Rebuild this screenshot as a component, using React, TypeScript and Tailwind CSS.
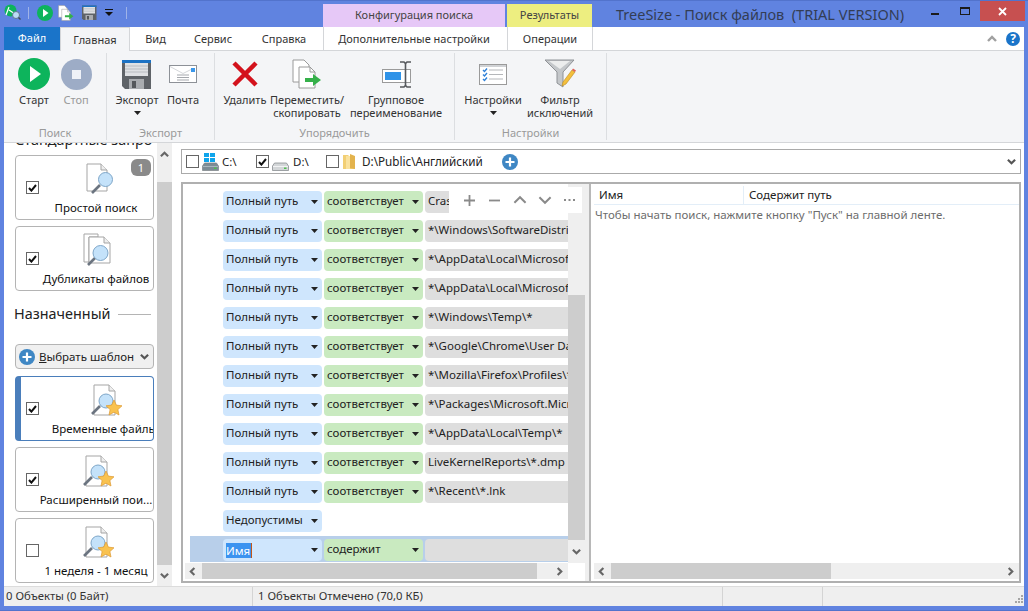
import React from "react";

const FONT = "font-['Noto_Sans','Open_Sans',sans-serif]";

function Caret({ className = "" }: { className?: string }) {
  return (
    <svg width="7" height="4" viewBox="0 0 7 4" className={className}>
      <path d="M0 0h7L3.5 4z" fill="#222" />
    </svg>
  );
}

function Check({ on }: { on?: boolean }) {
  return (
    <span className="w-[13px] h-[13px] border border-[#666] bg-white flex items-center justify-center shrink-0">
      {on && (
        <svg width="9" height="8" viewBox="0 0 9 8">
          <path d="M1 4l2.400 2.600L8 1" fill="none" stroke="#111" strokeWidth="2" />
        </svg>
      )}
    </span>
  );
}

function PlayCircle({ size = 32 }: { size?: number }) {
  return (
    <svg width={size} height={size} viewBox="0 0 32 32">
      <circle cx="16" cy="16" r="16" fill="#0db45c" />
      <path d="M12 8l11 8-11 8z" fill="#fff" />
    </svg>
  );
}

function StopCircle() {
  return (
    <svg width="31" height="31" viewBox="0 0 31 31">
      <circle cx="15.5" cy="15.5" r="15.5" fill="#9dacc6" />
      <rect x="11" y="11" width="9" height="9" fill="#eef1f7" />
    </svg>
  );
}

function Floppy({ s = 30 }: { s?: number }) {
  return (
    <svg width={s} height={s} viewBox="0 0 30 30">
      <path d="M0 1h29v29H3l-3-3z" fill="#5f6368" />
      <rect x="0" y="1" width="29" height="3" fill="#1c72c4" />
      <rect x="3" y="4" width="23" height="13" fill="#dfe1e4" />
      <path d="M3 7h23M3 10h23M3 13h23" stroke="#b9bcc1" />
      <rect x="7" y="20" width="15" height="10" fill="#a9acb0" />
      <rect x="10" y="22" width="4" height="7" fill="#55585c" />
    </svg>
  );
}

function Mail() {
  return (
    <svg width="28" height="18" viewBox="0 0 28 18">
      <rect x="0.5" y="0.5" width="27" height="17" fill="#fff" stroke="#8d9197" />
      <rect x="22" y="3" width="4" height="4" fill="#3a97ea" />
      <path d="M8 10h12M8 12.500h12M8 15h12" stroke="#a5a8ad" />
      <path d="M1 1.500l13 7 8-4" fill="none" stroke="#d5d7da" />
    </svg>
  );
}

function RedX() {
  return (
    <svg width="26" height="26" viewBox="0 0 26 26">
      <path d="M2 2l22 22M24 2L2 24" stroke="#d3121c" strokeWidth="4.5" />
    </svg>
  );
}

function CopyMove({ s = 30 }: { s?: number }) {
  return (
    <svg width={s} height={s} viewBox="0 0 30 30">
      <path d="M1 1h11l5 5v17H1z" fill="#fff" stroke="#9a9a9a" />
      <path d="M7 8h11l5 5v16H7z" fill="#fff" stroke="#9a9a9a" />
      <path d="M18 8v5h5" fill="none" stroke="#9a9a9a" />
      <path d="M13 19h8v-4l8 6-8 6v-4h-8z" fill="#35b04a" />
    </svg>
  );
}

function Rename() {
  return (
    <svg width="30" height="27" viewBox="0 0 30 27" className="ml-[2px]">
      <rect x="0.5" y="8.5" width="28" height="13" fill="#fff" stroke="#9a9a9a" />
      <rect x="3" y="11" width="16" height="8" fill="#2f93e8" />
      <path d="M18 1h4l1.500 1.500L25 1h4M23.500 2v23M18 26h4l1.500-1.500L25 26h4" fill="none" stroke="#55585c" strokeWidth="1.6" />
    </svg>
  );
}

function Settings() {
  return (
    <svg width="28" height="21" viewBox="0 0 28 21">
      <rect x="0.5" y="0.5" width="27" height="20" fill="#fff" stroke="#9a9a9a" />
      <rect x="1" y="1" width="26" height="2" fill="#d0d2d5" />
      <path d="M10 6h14M10 10.500h14M10 15h14" stroke="#b5b7ba" />
      <path d="M4 6l1.500 1.500L8 4.500M4 10.500L5.500 12 8 9M4 15l1.500 1.500L8 13.500" fill="none" stroke="#2f80d8" strokeWidth="1.4" />
    </svg>
  );
}

function Funnel() {
  return (
    <svg width="32" height="30" viewBox="0 0 32 30">
      <path d="M1 1h29L19 13v15l-6-4V13z" fill="#c4c7ca" stroke="#8f9296" />
      <path d="M5 2h21l-10 8z" fill="#eceded" />
      <path d="M18 27l1-4 9-12 3 2-9 12z" fill="#f4bf3c" stroke="#b98a20" strokeWidth="0.6" />
      <path d="M28 11l1-1.500 3 2-1 1.500z" fill="#e0625a" />
    </svg>
  );
}

function DocSearch({ variant }: { variant: "plain" | "dup" | "star" }) {
  if (variant === "plain") {
    return (
      <svg width="32" height="32" viewBox="0 0 32 32" className="overflow-visible">
        <path d="M7 3h14l6 6v21H7z" fill="#fff" stroke="#a5a5a5" />
        <path d="M21 3v6h6" fill="#eee" stroke="#a5a5a5" />
        <path d="M12 32l8-8" stroke="#6b7480" strokeWidth="2.6" />
        <circle cx="25.500" cy="18.500" r="7" fill="#c4e2fa" stroke="#7ea6c8" />
      </svg>
    );
  }
  if (variant === "dup") {
    return (
      <svg width="32" height="32" viewBox="0 0 32 32" className="overflow-visible">
        <path d="M4 2h14v3H9v25H4z" fill="#fff" stroke="#a5a5a5" />
        <path d="M9 5h15l6 6v20H9z" fill="#fff" stroke="#a5a5a5" />
        <path d="M24 5v6h6" fill="#eee" stroke="#a5a5a5" />
        <path d="M8 33l7-7" stroke="#6b7480" strokeWidth="2.6" />
        <circle cx="20.500" cy="21" r="7.500" fill="#c4e2fa" stroke="#7ea6c8" />
      </svg>
    );
  }
  return (
    <svg width="32" height="32" viewBox="0 0 32 32" className="overflow-visible">
      <path d="M6 3h15l6 6v24H6z" fill="#fff" stroke="#a5a5a5" />
      <path d="M21 3v6h6" fill="#eee" stroke="#a5a5a5" />
      <path d="M4 32l8-8" stroke="#6b7480" strokeWidth="2.6" />
      <circle cx="18" cy="19" r="7" fill="#c4e2fa" stroke="#7ea6c8" />
      <path d="M26 18l2.400 5.100 5.600.7-4.100 3.800 1.100 5.400-5-2.800-5 2.800 1.100-5.400-4.100-3.800 5.600-.7z" fill="#f9c24f" stroke="#dd9a33" strokeWidth="0.7" />
    </svg>
  );
}

function PlusCircle({ s = 16 }: { s?: number }) {
  return (
    <svg width={s} height={s} viewBox="0 0 16 16">
      <circle cx="8" cy="8" r="8" fill="#3f87c4" />
      <path d="M8 3.500v9M3.500 8h9" stroke="#fff" strokeWidth="2.200" />
    </svg>
  );
}

function DriveIcon({ win }: { win?: boolean }) {
  return (
    <svg width="17" height="18" viewBox="0 0 17 18">
      {win && (
        <g fill="#0fa5ec">
          <rect x="2" y="0" width="5" height="4" />
          <rect x="8" y="0" width="5" height="4" />
          <rect x="2" y="5" width="5" height="4" />
          <rect x="8" y="5" width="5" height="4" />
        </g>
      )}
      <path d="M0.500 13l2-3h12l2 3v4.500H0.500z" fill={win ? "#7d8c95" : "#d3d6d8"} stroke="#7c8185" strokeWidth="0.7" />
      <path d="M1 13.500h15" stroke={win ? "#a9b6bd" : "#f2f3f4"} />
      <rect x="12" y="14.500" width="2.500" height="1.500" fill="#4fc04f" />
    </svg>
  );
}

function Folder() {
  return (
    <svg width="13" height="17" viewBox="0 0 13 17">
      <path d="M0 2h5l1 1h6v13H0z" fill="#f2cf74" />
      <path d="M7 1l5 2v13l-5-1z" fill="#e3b34d" />
      <rect x="3" y="3" width="4" height="13" fill="#fae29e" />
    </svg>
  );
}

function Chev({ dir, color = "#666", s = 9, w = 2.4 }: { dir: "l" | "r" | "u" | "d"; color?: string; s?: number; w?: number }) {
  const d = { l: "M6 1L2 5l4 4", r: "M3 1l4 4-4 4", u: "M1 7l4-4 4 4", d: "M1 3l4 4 4-4" }[dir];
  return (
    <svg width={s} height={s} viewBox="0 0 10 10">
      <path d={d} fill="none" stroke={color} strokeWidth={w} />
    </svg>
  );
}

function RibbonBtn({ w, icon, label, caret }: { w: string; icon: React.ReactNode; label: React.ReactNode; caret?: boolean }) {
  return (
    <div className={`${w} flex flex-col items-center`}>
      <div className="h-[36px] flex items-center justify-center">{icon}</div>
      <div className="mt-[1px] text-[11px] leading-[13px] text-[#333] whitespace-nowrap text-center">{label}</div>
      {caret && <Caret className="mt-[5px]" />}
    </div>
  );
}

function Group({ w, label, children }: { w: string; label: string; children: React.ReactNode }) {
  return (
    <div className={`${w} h-[87px] mt-[2px] border-r border-[#dcdee1] flex flex-col shrink-0`}>
      <div className="flex-1 flex items-start pt-[3px]">{children}</div>
      <div className="h-[14px] leading-[14px] text-center text-[11px] text-[#9a9a9a]">{label}</div>
    </div>
  );
}

function Card({ on, variant, label, active, labelClass = "", badge }: { on?: boolean; variant: "plain" | "dup" | "star"; label: string; active?: boolean; labelClass?: string; badge?: boolean }) {
  return (
    <div className={`relative h-[65px] rounded-[4px] border flex items-center overflow-hidden ${active ? "border-[#4a7ebb] border-l-[6px]" : "border-[#b4b4b4] pl-[5px]"}`}>
      <div className="pl-[5px] shrink-0"><Check on={on} /></div>
      <div className="flex-1 min-w-0 flex flex-col items-center">
        <div className={active ? "ml-[16px]" : ""}><DocSearch variant={variant} /></div>
        <div className={`mt-[7px] -mb-[1px] text-[11.500px] leading-[16px] text-[#111] whitespace-nowrap ${labelClass}`}>{label}</div>
      </div>
      {badge && (
        <div className="absolute right-[2px] top-[3px] w-[20px] h-[17px] rounded-[6px] bg-[#8a8a8a] text-white text-[11px] leading-[17px] text-center">1</div>
      )}
    </div>
  );
}

function Row({ f, op, v, selected }: { f: string; op?: string; v?: string; selected?: boolean }) {
  return (
    <div className={`pl-[33px] flex items-start gap-[2px] shrink-0 ${selected ? "bg-[#b8cfea] h-[26px] mt-[1px] pt-[3px]" : "h-[29px] pt-[4px]"}`}>
      <div className="w-[99px] h-[22px] rounded-[4px] bg-[#cfe6fd] pl-[3px] pr-[4px] flex items-center justify-between text-[11.500px] text-[#222]">
        {selected ? <span className="bg-[#3b93f0] text-white pr-[1px] border-r border-[#c2571a] leading-[15px]">{f}</span> : <span className="-mt-[2px]">{f}</span>}
        <Caret />
      </div>
      {op && (
        <div className="w-[99px] h-[22px] rounded-[4px] bg-[#c9eac0] pl-[3px] pr-[4px] flex items-center justify-between text-[11.500px] text-[#222]">
          <span className="-mt-[2px]">{op}</span>
          <Caret />
        </div>
      )}
      {op && (
        <div className="w-[143px] h-[22px] rounded-l-[4px] bg-[#dedede] pl-[3px] pb-[2px] flex items-center overflow-hidden text-[11.500px] text-[#222] whitespace-nowrap">{v}</div>
      )}
    </div>
  );
}

function HScroll({ thumbW, className = "" }: { thumbW: string; className?: string }) {
  return (
    <div className={`h-[16px] flex items-stretch bg-[#efefef] ${className}`}>
      <div className="w-[17px] flex items-center justify-center shrink-0"><Chev dir="l" /></div>
      <div className={`${thumbW} bg-[#cdcdcd] shrink-0`} />
      <div className="flex-1" />
      <div className="w-[17px] flex items-center justify-center shrink-0"><Chev dir="r" /></div>
    </div>
  );
}

const rows: [string, string][] = [
  ["Полный путь", "Crash"],
  ["Полный путь", "*\\Windows\\SoftwareDistribution\\*"],
  ["Полный путь", "*\\AppData\\Local\\Microsoft\\*"],
  ["Полный путь", "*\\AppData\\Local\\Microsoft\\*"],
  ["Полный путь", "*\\Windows\\Temp\\*"],
  ["Полный путь", "*\\Google\\Chrome\\User Data\\*"],
  ["Полный путь", "*\\Mozilla\\Firefox\\Profiles\\*"],
  ["Полный путь", "*\\Packages\\Microsoft.MicrosoftEdge"],
  ["Полный путь", "*\\AppData\\Local\\Temp\\*"],
  ["Полный путь", "LiveKernelReports\\*.dmp"],
  ["Полный путь", "*\\Recent\\*.lnk"],
];

export default function App() {
  return (
    <div className={`${FONT} w-[1028px] h-[611px] bg-[#6083e0] flex flex-col overflow-hidden`}>
      {/* title bar */}
      <div className="h-[27px] flex shrink-0 border-t border-[#5273cc]">
        <div className="w-[323px] flex items-center pl-[4px] gap-[8px] shrink-0 pb-[3px]">
          <svg width="17" height="17" viewBox="0 0 17 17">
            <circle cx="6.500" cy="6.500" r="6" fill="#0db45c" />
            <path d="M5 3l-3 8M5 6l6 4" stroke="#fff" strokeWidth="1.200" />
            <circle cx="12" cy="11" r="3.500" fill="#bcdcf5" stroke="#60788c" />
            <path d="M14.500 13.500l2 2" stroke="#3f4a55" strokeWidth="1.500" />
          </svg>
          <div className="w-px h-[12px] bg-[#9fb3e8] ml-[-1px]" />
          <PlayCircle size={16} />
          <div className="-ml-[3px]"><CopyMove s={16} /></div>
          <Floppy s={15} />
          <svg width="8" height="7" viewBox="0 0 8 7"><path d="M0 0h8v1H0zM0 3h8L4 7z" fill="#111" /></svg>
          <div className="w-px h-[12px] bg-[#9fb3e8] ml-[5px]" />
        </div>
        <div className="w-[182px] mt-[3px] h-[23px] bg-[#e6c8f7] flex items-center justify-center text-[11px] text-[#444] shrink-0">Конфигурация поиска</div>
        <div className="w-[85px] ml-[2px] mt-[3px] h-[23px] bg-[#edee80] flex items-center justify-center text-[11px] text-[#444] shrink-0">Результаты</div>
        <div className="pl-[24px] pt-[3px] text-[14.500px] leading-[20px] text-[#333d55] whitespace-pre">TreeSize - Поиск файлов  (TRIAL VERSION)</div>
        <div className="flex-1 flex justify-end items-start pr-[3px]">
          <div className="w-[30px] h-[20px] flex items-center justify-center"><div className="w-[8px] h-[2px] bg-[#1b1b1b] mt-[5px]" /></div>
          <div className="w-[30px] h-[20px] flex items-center justify-center"><div className="w-[10px] h-[8px] border border-[#1b1b1b] border-t-2" /></div>
          <div className="w-[45px] h-[20px] bg-[#c75050] flex items-center justify-center">
            <svg width="9" height="9" viewBox="0 0 9 9"><path d="M1 1l7 7M8 1L1 8" stroke="#fff" strokeWidth="1.800" /></svg>
          </div>
        </div>
      </div>

      {/* body */}
      <div className="mx-[4px] flex-1 min-h-0 flex flex-col bg-[#f0f0f0]">
        {/* tabs */}
        <div className="h-[24px] bg-white border-b border-[#d4d6d9] flex items-stretch text-[11px] text-[#333] shrink-0 relative">
          <div className="w-[56px] bg-[#1a74c9] text-white flex items-center justify-center">Файл</div>
          <div className="w-[70px] h-[24px] bg-[#f4f5f7] border-x border-t border-[#d4d6d9] flex items-center justify-center pt-[1px]">Главная</div>
          <div className="w-[51px] flex items-center justify-center pt-[1px]">Вид</div>
          <div className="w-[64px] flex items-center justify-center pt-[1px]">Сервис</div>
          <div className="w-[78px] flex items-center justify-center pt-[1px]">Справка</div>
          <div className="w-[181px] border-l border-[#d4d6d9] flex items-center justify-center pt-[1px]">Дополнительные настройки</div>
          <div className="w-[86px] ml-[3px] border-x border-[#d4d6d9] flex items-center justify-center pt-[1px]">Операции</div>
          <div className="flex-1 flex items-center justify-end pr-[4px] gap-[9px]">
            <Chev dir="u" color="#a0a0a0" s={10} />
            <div className="w-[14px] h-[14px] rounded-full bg-[#1a74c9] text-white text-[12px] leading-[14px] font-bold text-center">?</div>
          </div>
        </div>

        {/* ribbon */}
        <div className="h-[92px] bg-[#f4f5f7] border-b border-[#d4d6d9] flex shrink-0">
          <Group w="w-[103px]" label="Поиск">
            <div className="flex pl-[9px]">
              <RibbonBtn w="w-[42px]" icon={<PlayCircle />} label="Старт" />
              <RibbonBtn w="w-[42px]" icon={<StopCircle />} label={<span className="text-[#9a9a9a]">Стоп</span>} />
            </div>
          </Group>
          <Group w="w-[108px]" label="Экспорт">
            <RibbonBtn w="w-[60px]" icon={<Floppy />} label="Экспорт" caret />
            <RibbonBtn w="w-[32px]" icon={<Mail />} label="Почта" />
          </Group>
          <Group w="w-[240px]" label="Упорядочить">
            <RibbonBtn w="w-[60px]" icon={<RedX />} label="Удалить" />
            <RibbonBtn w="w-[64px]" icon={<CopyMove />} label={<>Переместить/<br />скопировать</>} />
            <RibbonBtn w="w-[114px]" icon={<Rename />} label={<>Групповое<br />переименование</>} />
          </Group>
          <Group w="w-[152px]" label="Настройки">
            <RibbonBtn w="w-[76px]" icon={<Settings />} label="Настройки" caret />
            <RibbonBtn w="w-[58px]" icon={<Funnel />} label={<>Фильтр<br />исключений</>} />
          </Group>
        </div>

        {/* content */}
        <div className="flex-1 min-h-0 flex bg-white">
          {/* left pane */}
          <div className="w-[153px] shrink-0 overflow-hidden pl-[11px] bg-white">
            <div className="-mt-[13px] mb-[5px] h-[20px] text-[14.400px] leading-[20px] text-[#222] whitespace-nowrap overflow-hidden">Стандартные запро</div>
            <div className="w-[139px] flex flex-col">
              <Card on variant="plain" label="Простой поиск" badge />
              <div className="h-[6px]" />
              <Card on variant="dup" label="Дубликаты файлов" />
              <div className="mt-[14px] flex items-center h-[18px]">
                <span className="text-[14.400px] text-[#222] leading-[18px] -ml-[1px]">Назначенный</span>
                <div className="flex-1 h-px bg-[#b4b4b4] ml-[7px] mr-[3px]" />
              </div>
              <div className="mt-[21px] h-[25px] rounded-[4px] border border-[#b4b4b4] bg-[#f0f0f0] flex items-center pl-[3px] pr-[4px] text-[11.500px] text-[#222]">
                <PlusCircle />
                <span className="ml-[4px] flex-1 whitespace-nowrap"><u>В</u>ыбрать шаблон</span>
                <Chev dir="d" s={9} color="#555" />
              </div>
              <div className="h-[7px]" />
              <Card on variant="star" label="Временные файлы" active labelClass="ml-[17px]" />
              <div className="h-[6px]" />
              <Card on variant="star" label="Расширенный пои..." />
              <div className="h-[6px]" />
              <Card variant="star" label="1 неделя - 1 месяц" />
            </div>
          </div>
          {/* left scrollbar */}
          <div className="w-[15px] shrink-0 bg-[#efefef] flex flex-col">
            <div className="h-[39px] flex justify-center items-center pb-[19px] pt-[2px]"><Chev dir="u" s={9} /></div>
            <div className="h-[383px] bg-[#cdcdcd]" />
            <div className="flex-1 flex justify-center items-center"><Chev dir="d" s={9} /></div>
          </div>

          {/* main */}
          <div className="flex-1 min-w-0 pl-[9px] pr-[3px] pt-[6px] pb-[3px] flex flex-col bg-white">
            <div className="h-[25px] border border-[#aaa] bg-white flex items-center pl-[4px] pr-[4px] text-[11.500px] text-[#222] shrink-0">
              <Check /><span className="ml-[3px]"><DriveIcon win /></span><span className="ml-[3px] w-[34px]">C:\</span>
              <Check on /><span className="ml-[3px]"><DriveIcon /></span><span className="ml-[4px] w-[33px]">D:\</span>
              <Check /><span className="ml-[4px]"><Folder /></span><span className="ml-[6px] text-[11.700px]">D:\Public\Английский</span>
              <span className="ml-[19px]"><PlusCircle /></span>
              <span className="ml-auto"><Chev dir="d" s={9} color="#555" /></span>
            </div>
            <div className="mt-[8px] flex-1 min-h-0 border-2 border-[#b0b0b0] flex bg-white">
              {/* query */}
              <div className="w-[402px] shrink-0 flex flex-col min-h-0 relative">
                <div className="flex-1 min-h-0 flex">
                  <div className="w-[385px] pl-[7px] pt-[3px] shrink-0 flex flex-col overflow-hidden">
                    {rows.map((r, i) => (
                      <Row key={i} f={r[0]} op="соответствует" v={r[1]} />
                    ))}
                    <Row f="Недопустимы" />
                    <Row f="Имя" op="содержит" v="" selected />
                  </div>
                  <div className="flex-1 bg-[#efefef] flex flex-col">
                    <div className="h-[111px]" />
                    <div className="h-[245px] bg-[#cdcdcd]" />
                    <div className="flex-1 flex justify-center items-center"><Chev dir="d" s={9} /></div>
                  </div>
                </div>
                <div className="h-[16px] mb-[2px] flex pl-[2px]">
                  <HScroll thumbW="w-[335px]" className="w-[383px]" />
                </div>
                {/* floating toolbar */}
                <div className="absolute left-[266px] top-[3px] w-[133px] h-[26px] bg-white flex items-center pl-[15px] gap-[12px]">
                  <svg width="11" height="11" viewBox="0 0 11 11"><path d="M5.500 0v11M0 5.500h11" stroke="#8a8a8a" strokeWidth="1.800" /></svg>
                  <svg width="11" height="11" viewBox="0 0 11 11" className="ml-[2px]"><path d="M0 5.500h11" stroke="#8a8a8a" strokeWidth="1.800" /></svg>
                  <span className="ml-[1px]"><Chev dir="u" s={14} color="#8a8a8a" w={1.400} /></span>
                  <span className="-ml-[1px]"><Chev dir="d" s={14} color="#8a8a8a" w={1.400} /></span>
                  <svg width="11" height="3" viewBox="0 0 11 3"><path d="M0 0h2v2H0zM4.500 0h2v2h-2zM9 0h2v2H9z" fill="#8a8a8a" /></svg>
                </div>
              </div>
              {/* splitter */}
              <div className="w-[4px] bg-[#efefef] shrink-0" />
              <div className="w-[2px] bg-[#b8b8b8] shrink-0" />
              {/* results */}
              <div className="flex-1 min-w-0 pl-[3px] flex flex-col">
                <div className="h-[20px] mt-[1px] border-b border-[#e3eef8] flex items-center text-[11.500px] text-[#222] shrink-0 pt-[1px]">
                  <div className="w-[150px] pl-[5px] h-full flex items-center border-r border-[#e3eef8]">Имя</div>
                  <div className="pl-[5px]">Содержит путь</div>
                </div>
                <div className="pl-[1px] pt-[2px] text-[11.500px] text-[#6d6d6d] leading-[16px] whitespace-nowrap flex-1">Чтобы начать поиск, нажмите кнопку "Пуск" на главной ленте.</div>
                <HScroll thumbW="w-[220px]" className="mb-[2px]" />
              </div>
            </div>
          </div>
        </div>

        {/* status */}
        <div className="h-[20px] bg-[#efefef] border-t border-[#dcdcdc] flex items-stretch text-[11.300px] text-[#333] shrink-0 relative">
          <div className="w-[249px] pl-[2px] flex items-center border-r border-[#d4d4d4]">0 Объекты (0 Байт)</div>
          <div className="w-[470px] pl-[5px] flex items-center border-r border-[#d4d4d4]">1 Объекты Отмечено (70,0 КБ)</div>
          <div className="w-[100px] border-r border-[#d4d4d4]" />
          <div className="flex-1 flex items-end justify-end pr-[1px] pb-[2px]">
            <svg width="9" height="9" viewBox="0 0 9 9"><path d="M7 0h2v2H7zM4 3h2v2H4zM7 3h2v2H7zM1 6h2v2H1zM4 6h2v2H4zM7 6h2v2H7z" fill="#a5a5a5" /></svg>
          </div>
        </div>
      </div>
      <div className="h-[5px] shrink-0 border-b border-[#5273cc]" />
    </div>
  );
}
